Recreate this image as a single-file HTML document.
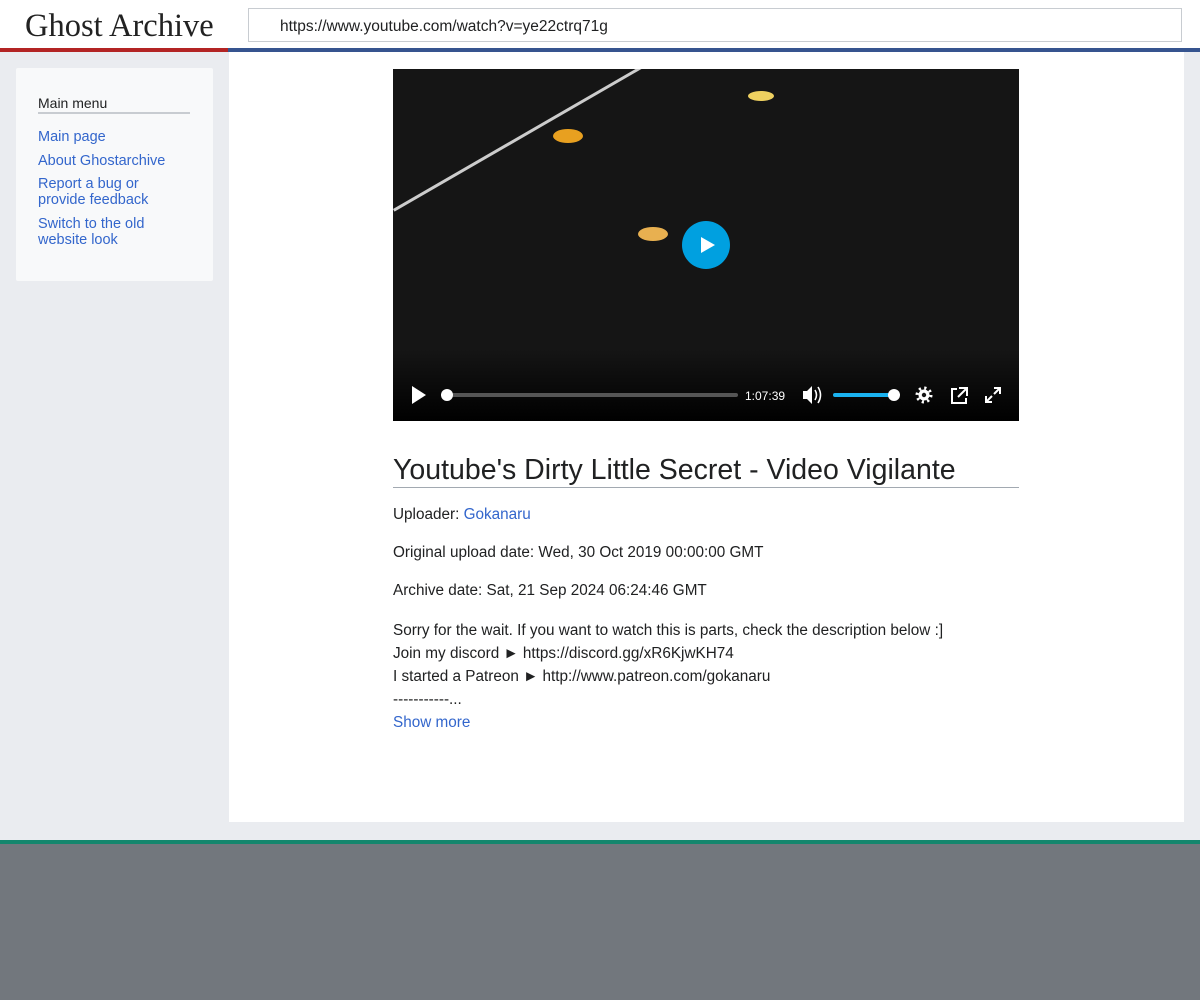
<!DOCTYPE html>
<html><head><style>
body{margin:0;width:1200px;height:1000px;background:#72777d;font-family:"Liberation Sans",sans-serif;position:relative;overflow:hidden}
.top{position:absolute;left:0;top:0;width:1200px;height:48px;background:#fff}
.logo{position:absolute;left:25px;top:8px;font-family:"Liberation Serif",serif;font-size:32.5px;color:#222}
.url{position:absolute;left:248px;top:8px;width:934px;height:34px;border:1px solid #c8ccd1;box-sizing:border-box;font-size:15.5px;line-height:36px;padding-left:31px;color:#202122}
.bar1{position:absolute;left:0;top:48px;width:228px;height:4px;background:#b32424}
.bar2{position:absolute;left:228px;top:48px;width:972px;height:4px;background:#36548f}
.bg{position:absolute;left:0;top:52px;width:1200px;height:788px;background:#eaecf0}
.side{position:absolute;left:16px;top:68px;width:197px;height:213px;background:#f8f9fa;border-radius:2px}
.side h3{position:absolute;left:22px;top:27px;margin:0;font-weight:normal;font-size:14px;color:#202122;width:152px;border-bottom:2px solid #c8ccd1;padding-bottom:1px}
.side a{position:absolute;left:22px;font-size:14.5px;color:#3366cc;line-height:16px;text-decoration:none}
.main{position:absolute;left:229px;top:52px;width:955px;height:770px;background:#fff}
.foot{position:absolute;left:0;top:840px;width:1200px;height:4px;background:#14866d}
.vid{position:absolute;left:393px;top:69px;width:626px;height:352px;background:#151515;overflow:hidden}
.c{position:absolute;left:393px;font-size:15.3px;color:#202122}
.c a{color:#3366cc;text-decoration:none}
</style></head><body>
<div class="top"><div class="logo">Ghost Archive</div><div class="url">https://www.youtube.com/watch?v=ye22ctrq71g</div></div>
<div class="bar1"></div><div class="bar2"></div>
<div class="bg"></div>
<div class="side"><h3>Main menu</h3>
<a style="top:61px">Main page</a>
<a style="top:85px">About Ghostarchive</a>
<a style="top:108px">Report a bug or<br>provide feedback</a>
<a style="top:148px">Switch to the old<br>website look</a></div>
<div class="main"></div>
<div class="foot"></div>
<div class="vid">
<div style="position:absolute;left:0;width:400px;height:3px;background:#ccc;transform:rotate(-30deg);transform-origin:0 0;top:140px"></div>
<div style="position:absolute;left:160px;top:60px;width:30px;height:14px;border-radius:50%;background:#e8a020"></div>
<div style="position:absolute;left:245px;top:158px;width:30px;height:14px;border-radius:50%;background:#e8b050"></div>
<div style="position:absolute;left:355px;top:22px;width:26px;height:10px;border-radius:50%;background:#eed060"></div>
<div style="position:absolute;left:0;top:280px;width:626px;height:72px;background:linear-gradient(transparent,#000)"></div>
<div style="position:absolute;left:289px;top:152px;width:48px;height:48px;border-radius:50%;background:#00a0e0"></div>
<svg style="position:absolute;left:289px;top:152px" width="48" height="48"><path d="M19 16 L33 24 L19 32Z" fill="#fff"/></svg>
<svg style="position:absolute;left:0;top:310px" width="626" height="42">
<path d="M19 7 L33 16 L19 25Z" fill="#fff"/>
<rect x="48" y="14" width="297" height="4" rx="2" fill="#555"/>
<circle cx="54" cy="16" r="6" fill="#fff"/>
<text x="352" y="21" font-size="12" fill="#fff" font-family="Liberation Sans">1:07:39</text>
<path d="M410 12h4l5-5v18l-5-5h-4z" fill="#fff"/><path d="M422 11q3 5 0 10M425 8q5 8 0 16" stroke="#fff" stroke-width="1.6" fill="none"/>
<rect x="440" y="14" width="62" height="4" rx="2" fill="#1ab2f0"/>
<circle cx="501" cy="16" r="6" fill="#fff"/>
<circle cx="531" cy="16" r="5.5" fill="#fff"/><circle cx="531" cy="16" r="7" fill="none" stroke="#fff" stroke-width="3" stroke-dasharray="2.2 3.3"/><circle cx="531" cy="16" r="2.2" fill="#151515"/>
<path d="M564 10h-5v14h14v-5M566 9h8v8M574 9l-9 9" stroke="#fff" stroke-width="2" fill="none"/>
<path d="M593 17v6h6M593 23l6-6M601 9h6v6M607 9l-6 6" stroke="#fff" stroke-width="2" fill="none"/>
</svg></div>
<div class="c" style="top:453px;font-size:28.5px;width:626px;border-bottom:1px solid #a2a9b1;line-height:34px">Youtube's Dirty Little Secret - Video Vigilante</div>
<div class="c" style="top:506px">Uploader: <a>Gokanaru</a></div>
<div class="c" style="top:544px">Original upload date: Wed, 30 Oct 2019 00:00:00 GMT</div>
<div class="c" style="top:582px">Archive date: Sat, 21 Sep 2024 06:24:46 GMT</div>
<div class="c" style="top:619px;line-height:23px">Sorry for the wait. If you want to watch this is parts, check the description below :]<br>Join my discord ► https://discord.gg/xR6KjwKH74<br>I started a Patreon ► http://www.patreon.com/gokanaru<br>-----------...<br><a>Show more</a></div>
</body></html>
